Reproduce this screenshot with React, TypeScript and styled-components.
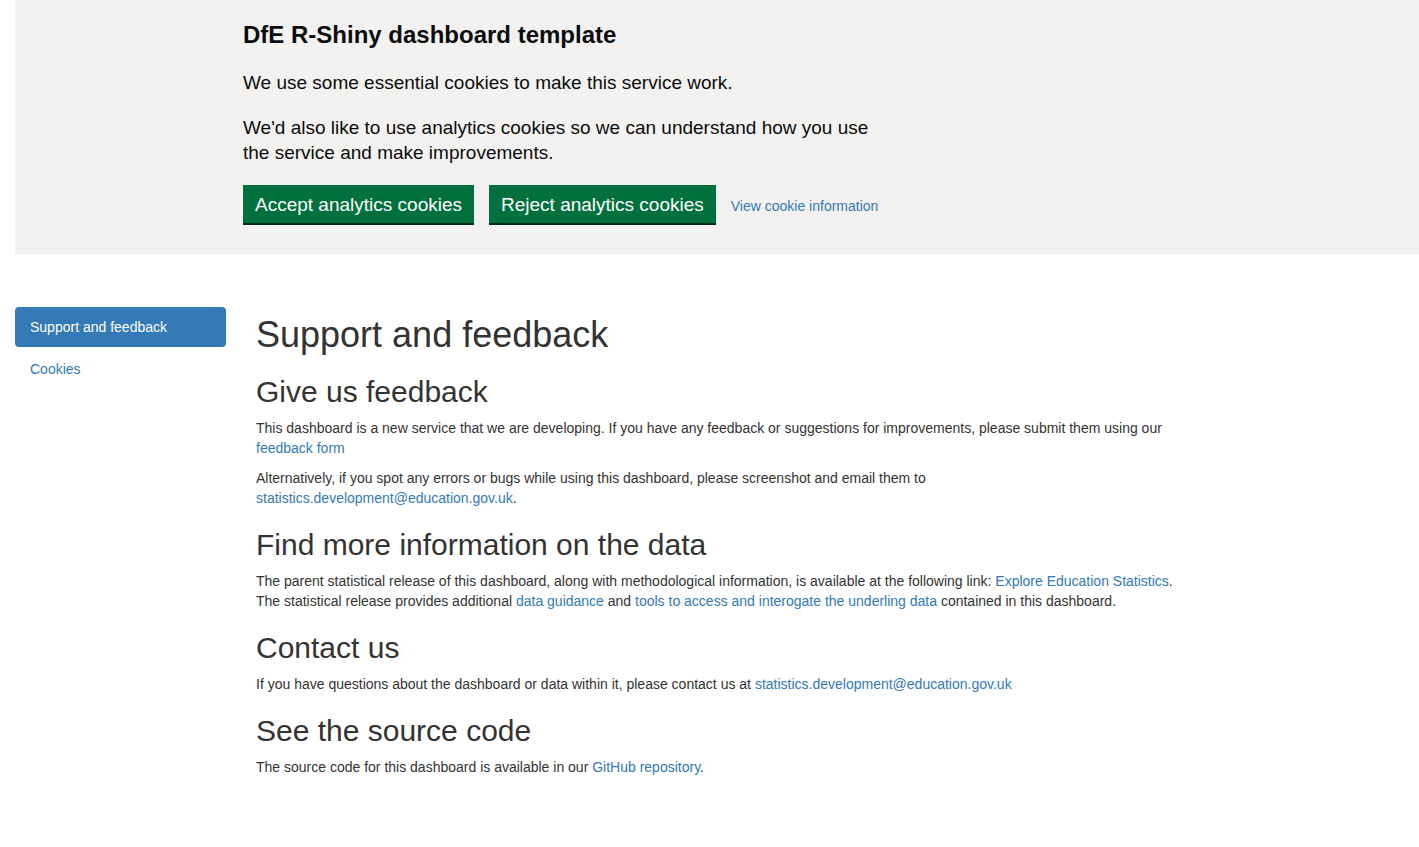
import React from "react";
import styled, { createGlobalStyle } from "styled-components";

const GlobalStyle = createGlobalStyle`
  html, body {
    margin: 0;
    padding: 0;
    background: #ffffff;
  }
  body {
    font-family: "Liberation Sans", Arial, Helvetica, sans-serif;
    font-size: 14px;
    line-height: 20px;
    color: #333333;
  }
  * { box-sizing: border-box; }
`;

const Page = styled.div`
  padding-left: 15px;
`;

const Banner = styled.section`
  background: #f3f2f1;
  padding: 20px 0 9px 228px;
  color: #0b0c0c;
`;

const BannerInner = styled.div`
  max-width: 640px;
`;

const BannerTitle = styled.h2`
  margin: 0 0 20px;
  font-size: 24px;
  line-height: 30px;
  font-weight: 700;
  color: #0b0c0c;
`;

const BannerText = styled.p`
  margin: 0 0 20px;
  font-size: 19px;
  line-height: 25px;
`;

const ButtonGroup = styled.div`
  display: flex;
  align-items: center;
  gap: 15px;
  width: 900px;
`;

const GreenButton = styled.button`
  font-family: "Liberation Sans", Arial, sans-serif;
  font-size: 19px;
  line-height: 20px;
  height: 38px;
  padding: 8px 10px 6px;
  border: 2px solid transparent;
  border-radius: 0;
  background: #00703c;
  color: #ffffff;
  box-shadow: 0 2px 0 #002d18;
  margin-bottom: 22px;
  cursor: pointer;
`;

const BannerLink = styled.a`
  font-size: 14px;
  color: #337ab7;
  text-decoration: none;
  margin-left: 0;
  margin-bottom: 19px;
`;

const Row = styled.div`
  display: flex;
  align-items: flex-start;
  margin-top: 40px;
`;

const Sidebar = styled.nav`
  width: 211px;
  flex: none;
  padding-top: 13px;
`;

const NavList = styled.ul`
  list-style: none;
  margin: 0;
  padding: 0;
  display: flex;
  flex-direction: column;
  gap: 2px;
`;

const NavItem = styled.a<{ $active?: boolean }>`
  display: block;
  padding: 10px 15px;
  border-radius: 4px;
  font-size: 14px;
  line-height: 20px;
  text-decoration: none;
  background: ${(p) => (p.$active ? "#337ab7" : "transparent")};
  color: ${(p) => (p.$active ? "#ffffff" : "#337ab7")};
`;

const Main = styled.main`
  margin-left: 30px;
  width: 934px;
  flex: none;
  display: flow-root;
`;

const Title = styled.h1`
  font-size: 36px;
  line-height: 1.1;
  font-weight: 500;
  margin: 21px 0 10px;
  color: #333333;
`;

const Heading = styled.h2`
  font-size: 30px;
  line-height: 1.1;
  font-weight: 500;
  margin: 20px 0 10px;
  color: #333333;
`;

const Para = styled.p`
  margin: 0 0 10px;
  font-size: 14px;
  line-height: 20px;
`;

const Link = styled.a`
  color: #337ab7;
  text-decoration: none;
`;

export default function App() {
  return (
    <>
      <GlobalStyle />
      <Page>
        <Banner>
          <BannerInner>
            <BannerTitle>DfE R-Shiny dashboard template</BannerTitle>
            <BannerText>We use some essential cookies to make this service work.</BannerText>
            <BannerText>
              We'd also like to use analytics cookies so we can understand how you use the service and make
              improvements.
            </BannerText>
            <ButtonGroup>
              <GreenButton>Accept analytics cookies</GreenButton>
              <GreenButton>Reject analytics cookies</GreenButton>
              <BannerLink href="#">View cookie information</BannerLink>
            </ButtonGroup>
          </BannerInner>
        </Banner>
        <Row>
          <Sidebar>
            <NavList>
              <li>
                <NavItem href="#" $active>
                  Support and feedback
                </NavItem>
              </li>
              <li>
                <NavItem href="#">Cookies</NavItem>
              </li>
            </NavList>
          </Sidebar>
          <Main>
            <Title>Support and feedback</Title>
            <Heading>Give us feedback</Heading>
            <Para>
              This dashboard is a new service that we are developing. If you have any feedback or suggestions for
              improvements, please submit them using our <Link href="#">feedback form</Link>
            </Para>
            <Para>
              Alternatively, if you spot any errors or bugs while using this dashboard, please screenshot and email
              them to <Link href="#">statistics.development@education.gov.uk</Link>.
            </Para>
            <Heading>Find more information on the data</Heading>
            <Para>
              The parent statistical release of this dashboard, along with methodological information, is available
              at the following link: <Link href="#">Explore Education Statistics</Link>. The statistical release
              provides additional <Link href="#">data guidance</Link> and{" "}
              <Link href="#">tools to access and interogate the underling data</Link> contained in this dashboard.
            </Para>
            <Heading>Contact us</Heading>
            <Para>
              If you have questions about the dashboard or data within it, please contact us at{" "}
              <Link href="#">statistics.development@education.gov.uk</Link>
            </Para>
            <Heading>See the source code</Heading>
            <Para>
              The source code for this dashboard is available in our <Link href="#">GitHub repository</Link>.
            </Para>
          </Main>
        </Row>
      </Page>
    </>
  );
}
